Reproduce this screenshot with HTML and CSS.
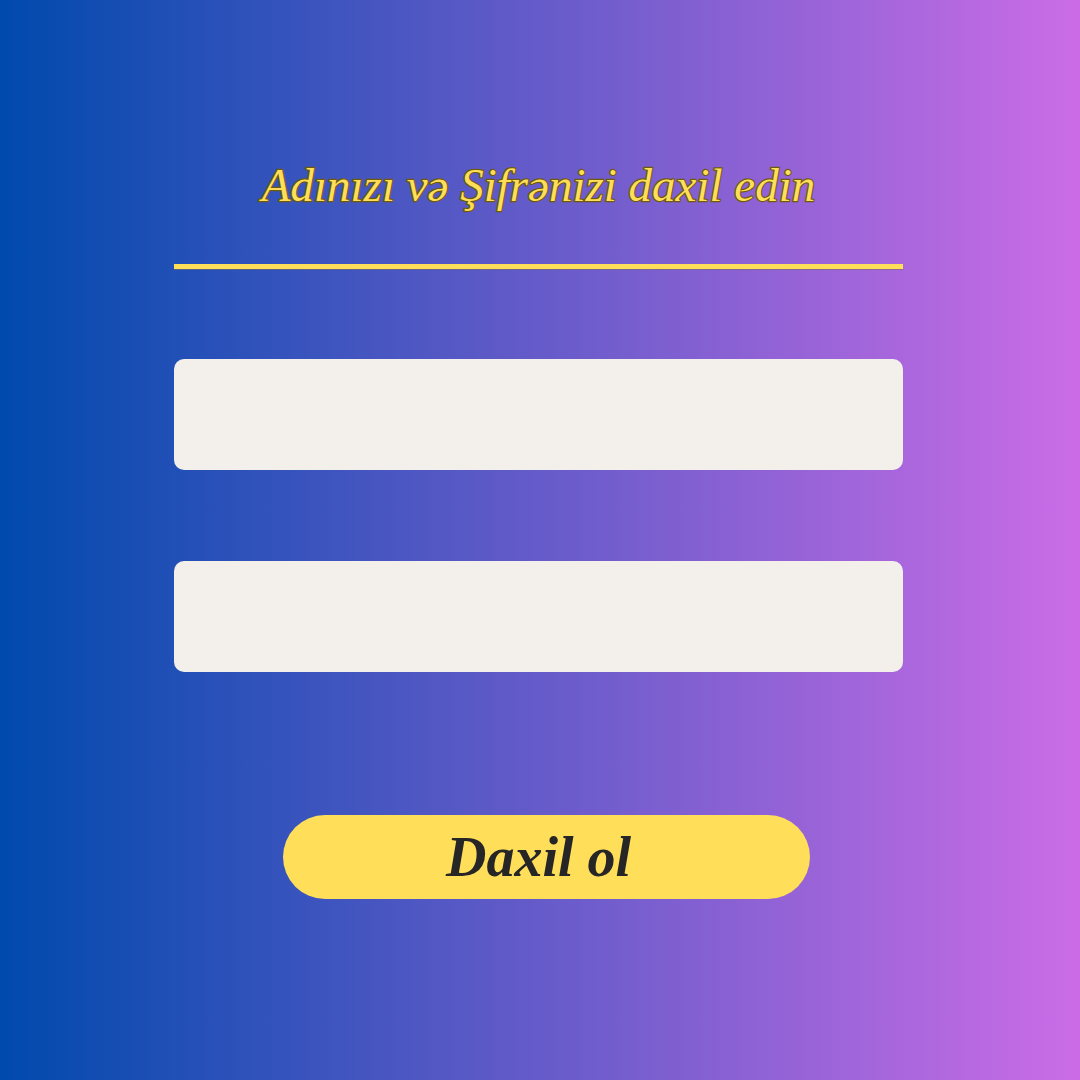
FILE: index.html
```html
<!DOCTYPE html>
<html lang="az">
<head>
<meta charset="utf-8">
<title>Daxil ol</title>
<link rel="stylesheet" href="styles.css">
</head>
<body>
<main class="page">
  <h1 class="title">Adınızı və Şifrənizi daxil edin</h1>
  <div class="rule"></div>
  <input class="field" type="text" aria-label="Ad">
  <input class="field field-second" type="password" aria-label="Şifrə">
  <button class="btn" type="button">Daxil ol</button>
</main>
</body>
</html>
```
FILE: styles.css
```css
html, body {
  margin: 0;
  padding: 0;
}
body {
  width: 1080px;
  height: 1080px;
  background: linear-gradient(90deg, #004aad 0%, #cb6ce6 100%);
  overflow: hidden;
}
.page {
  display: flex;
  flex-direction: column;
  align-items: center;
  width: 729px;
  padding-left: 174px;
  padding-top: 160px;
}
.title {
  margin: 0;
  height: 50px;
  font-family: "Liberation Serif", serif;
  font-style: italic;
  font-weight: normal;
  font-size: 47px;
  line-height: 50px;
  color: #ffde59;
  -webkit-text-stroke: 2.4px #6e5a0c;
  paint-order: stroke fill;
  white-space: nowrap;
}
.rule {
  width: 729px;
  height: 5px;
  margin-top: 54px;
  background: #ffde59;
  box-shadow: 0 1px 0 rgba(120, 110, 90, 0.6);
}
.field {
  display: block;
  box-sizing: border-box;
  width: 729px;
  height: 111px;
  margin-top: 90px;
  border: none;
  border-radius: 10px;
  background: #f3f0eb;
  outline: none;
}
.field-second {
  margin-top: 91px;
}
.btn {
  box-sizing: border-box;
  width: 527px;
  height: 84px;
  margin-top: 143px;
  margin-left: 16px;
  padding: 0 16px 0 0;
  border: none;
  border-radius: 42px;
  background: #ffde59;
  color: #262626;
  font-family: "Liberation Serif", serif;
  font-style: italic;
  font-weight: bold;
  font-size: 56px;
  line-height: 82px;
}
```
